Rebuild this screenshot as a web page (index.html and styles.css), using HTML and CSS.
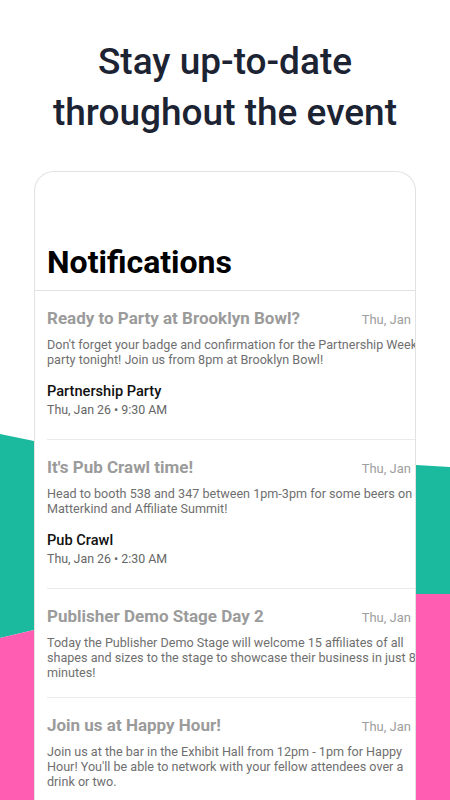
FILE: index.html
```html
<!DOCTYPE html>
<html lang="en">
<head>
    <meta charset="UTF-8">
    <meta name="viewport" content="width=device-width, initial-scale=1.0">
    <title>Stay up-to-date</title>
    <link rel="stylesheet" href="styles.css">
</head>
<body>
    <div class="page">
        <h1 class="headline">Stay up-to-date<br>throughout the event</h1>

        <div class="phone-card">
            <div class="card-header">
                <h2>Notifications</h2>
            </div>

            <div class="item">
                <div class="item-head">
                    <span class="item-title">Ready to Party at Brooklyn Bowl?</span>
                    <span class="item-when">Thu, Jan</span>
                </div>
                <p class="item-body">Don't forget your badge and confirmation for the Partnership Week party tonight! Join us from 8pm at Brooklyn Bowl!</p>
                <div class="event">
                    <div class="event-name">Partnership Party</div>
                    <div class="event-time">Thu, Jan 26 &bull; 9:30 AM</div>
                </div>
            </div>

            <div class="item">
                <div class="item-head">
                    <span class="item-title">It's Pub Crawl time!</span>
                    <span class="item-when">Thu, Jan</span>
                </div>
                <p class="item-body">Head to booth 538 and 347 between 1pm-3pm for some beers on Matterkind and Affiliate Summit!</p>
                <div class="event">
                    <div class="event-name">Pub Crawl</div>
                    <div class="event-time">Thu, Jan 26 &bull; 2:30 AM</div>
                </div>
            </div>

            <div class="item no-event">
                <div class="item-head">
                    <span class="item-title">Publisher Demo Stage Day 2</span>
                    <span class="item-when">Thu, Jan</span>
                </div>
                <p class="item-body">Today the Publisher Demo Stage will welcome 15 affiliates of all shapes and sizes to the stage to showcase their business in just 8 minutes!</p>
            </div>

            <div class="item no-event">
                <div class="item-head">
                    <span class="item-title">Join us at Happy Hour!</span>
                    <span class="item-when">Thu, Jan</span>
                </div>
                <p class="item-body">Join us at the bar in the Exhibit Hall from 12pm - 1pm for Happy Hour! You'll be able to network with your fellow attendees over a drink or two.</p>
            </div>
        </div>
    </div>
</body>
</html>
```

FILE: styles.css
```css
body {
    margin: 0;
    font-family: Roboto, "Liberation Sans", sans-serif;
    background: #fff;
}
.page {
    width: 450px;
    height: 800px;
    overflow: hidden;
    background-color: #fff;
    background-image: url("data:image/svg+xml,%3Csvg xmlns='http://www.w3.org/2000/svg' width='450' height='800'%3E%3Cpolygon fill='%231bba9f' points='0,434 34,441 416,465 450,467 450,594 416,594 34,630 0,638'/%3E%3Cpolygon fill='%23ff5db1' points='0,638 34,630 416,594 450,594 450,800 0,800'/%3E%3C/svg%3E");
    background-repeat: no-repeat;
}
.headline {
    margin: 36px 0 0;
    text-align: center;
    font-size: 37px;
    font-weight: 500;
    line-height: 51px;
    color: #1c2333;
}
.phone-card {
    margin: 33px 34px 0;
    height: 700px;
    background: #fff;
    border: 1px solid #e2e2e2;
    border-bottom: none;
    border-radius: 20px 20px 0 0;
    overflow: hidden;
}
.card-header {
    padding: 71px 12px 9px;
    border-bottom: 1px solid #e2e2e2;
}
.card-header h2 {
    margin: 0;
    font-size: 32px;
    line-height: 38px;
    font-weight: 700;
    color: #000;
}
.item {
    margin-left: 12px;
    padding: 16px 0 21px;
    border-bottom: 1px solid #ebebeb;
}
.item.no-event {
    padding-bottom: 17px;
}
.item-head {
    display: flex;
    justify-content: space-between;
    align-items: baseline;
    width: 364px;
    height: 22px;
    line-height: 22px;
}
.item-title {
    font-size: 17px;
    font-weight: 700;
    color: #9b9b9b;
    white-space: nowrap;
}
.item-when {
    font-size: 13px;
    line-height: 18px;
    color: #9e9e9e;
}
.item-body {
    width: 380px;
    margin: 8px 0 0;
    font-size: 12.6px;
    line-height: 15px;
    color: #6f6f6f;
}
.event {
    margin-top: 15px;
}
.event-name {
    font-size: 14.6px;
    line-height: 18px;
    font-weight: 500;
    color: #111;
}
.event-time {
    margin-top: 2px;
    font-size: 12.4px;
    line-height: 16px;
    color: #666;
}
```
